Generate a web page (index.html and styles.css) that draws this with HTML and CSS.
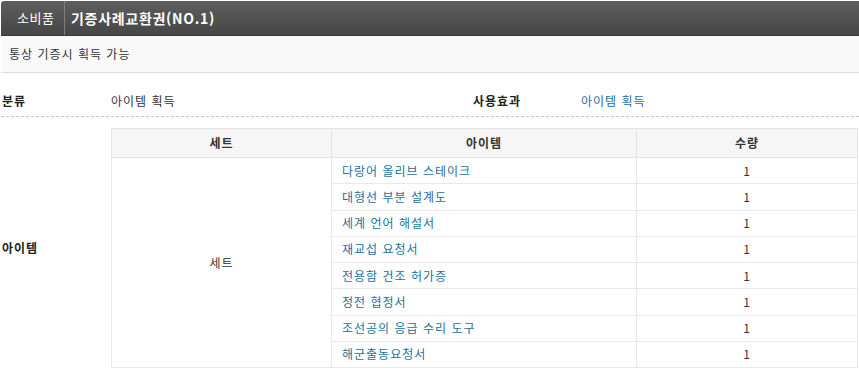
FILE: index.html
```html
<!DOCTYPE html>
<html lang="ko">
<head>
<meta charset="utf-8">
<title>기증사례교환권(NO.1)</title>
<link rel="stylesheet" href="styles.css">
</head>
<body>
<div class="wrap">
  <div class="titlebar">
    <span class="cat">소비품</span>
    <span class="title">기증사례교환권(NO.1)</span>
  </div>
  <div class="desc">통상 기증시 획득 가능</div>
  <div class="info">
    <span class="label">분류</span>
    <span class="value">아이템 획득</span>
    <span class="label">사용효과</span>
    <a class="link value" href="#">아이템 획득</a>
  </div>
  <div class="items">
    <div class="items-label">아이템</div>
    <table class="itable">
      <thead>
        <tr><th class="c-set">세트</th><th class="c-item">아이템</th><th class="c-qty">수량</th></tr>
      </thead>
      <tbody>
        <tr><td class="set" rowspan="8">세트</td><td class="item"><a class="link" href="#">다랑어 올리브 스테이크</a></td><td class="qty">1</td></tr>
        <tr><td class="item"><a class="link" href="#">대형선 부분 설계도</a></td><td class="qty">1</td></tr>
        <tr><td class="item"><a class="link" href="#">세계 언어 해설서</a></td><td class="qty">1</td></tr>
        <tr><td class="item"><a class="link" href="#">재교섭 요청서</a></td><td class="qty">1</td></tr>
        <tr><td class="item"><a class="link" href="#">전용함 건조 허가증</a></td><td class="qty">1</td></tr>
        <tr><td class="item"><a class="link" href="#">정전 협정서</a></td><td class="qty">1</td></tr>
        <tr><td class="item"><a class="link" href="#">조선공의 응급 수리 도구</a></td><td class="qty">1</td></tr>
        <tr><td class="item"><a class="link" href="#">해군출동요청서</a></td><td class="qty">1</td></tr>
      </tbody>
    </table>
  </div>
</div>
</body>
</html>
```

FILE: styles.css
```css
html, body {
  margin: 0;
  padding: 0;
  background: #fff;
}
body {
  font-family: "Noto Sans CJK KR", "Noto Sans", sans-serif;
  font-size: 12px;
  line-height: 16px;
  color: #333;
  letter-spacing: 1px;
}
.wrap {
  padding: 1px 0 0 1px;
}
.titlebar {
  display: flex;
  align-items: stretch;
  height: 34px;
  background: linear-gradient(#5e5e5e, #464646);
  border-bottom: 1px solid #373737;
  border-top-left-radius: 3px;
  color: #fff;
}
.cat {
  display: flex;
  align-items: center;
  width: 47px;
  padding-left: 16px;
  border-right: 1px solid #808080;
  font-size: 13px;
  letter-spacing: 0.5px;
}
.title {
  display: flex;
  align-items: center;
  padding-left: 6px;
  font-size: 14px;
  font-weight: bold;
  letter-spacing: 0.7px;
}
.desc {
  display: flex;
  align-items: center;
  height: 36px;
  padding-left: 8px;
  background: #f9f9f9;
  border-bottom: 1px solid #dcdcdc;
}
.info {
  display: grid;
  grid-template-columns: 110px 361px 109px 1fr;
  padding: 20px 0 7px;
  border-bottom: 1px dashed #c4c4c4;
}
.label {
  font-weight: bold;
  color: #222;
  padding-left: 1px;
}
.link {
  color: #236f9c;
  text-decoration: none;
}
.items {
  display: flex;
  align-items: center;
  margin-top: 11px;
}
.items-label {
  width: 109px;
  padding-left: 1px;
  font-weight: bold;
  color: #222;
}
.itable {
  width: 747px;
  border-collapse: collapse;
  border: 1px solid #e4e4e4;
}
.itable th {
  height: 28px;
  padding: 0;
  background: #f6f6f6;
  border: 1px solid #e4e4e4;
  font-weight: bold;
  color: #333;
  text-align: center;
}
.c-set { width: 219px; }
.c-item { width: 304px; }
.itable td {
  height: 25.25px;
  padding: 0;
  border: 1px solid #e8e8e8;
}
.set {
  text-align: center;
  vertical-align: middle;
}
.item {
  padding-left: 10px !important;
}
.qty {
  text-align: center;
}
```
